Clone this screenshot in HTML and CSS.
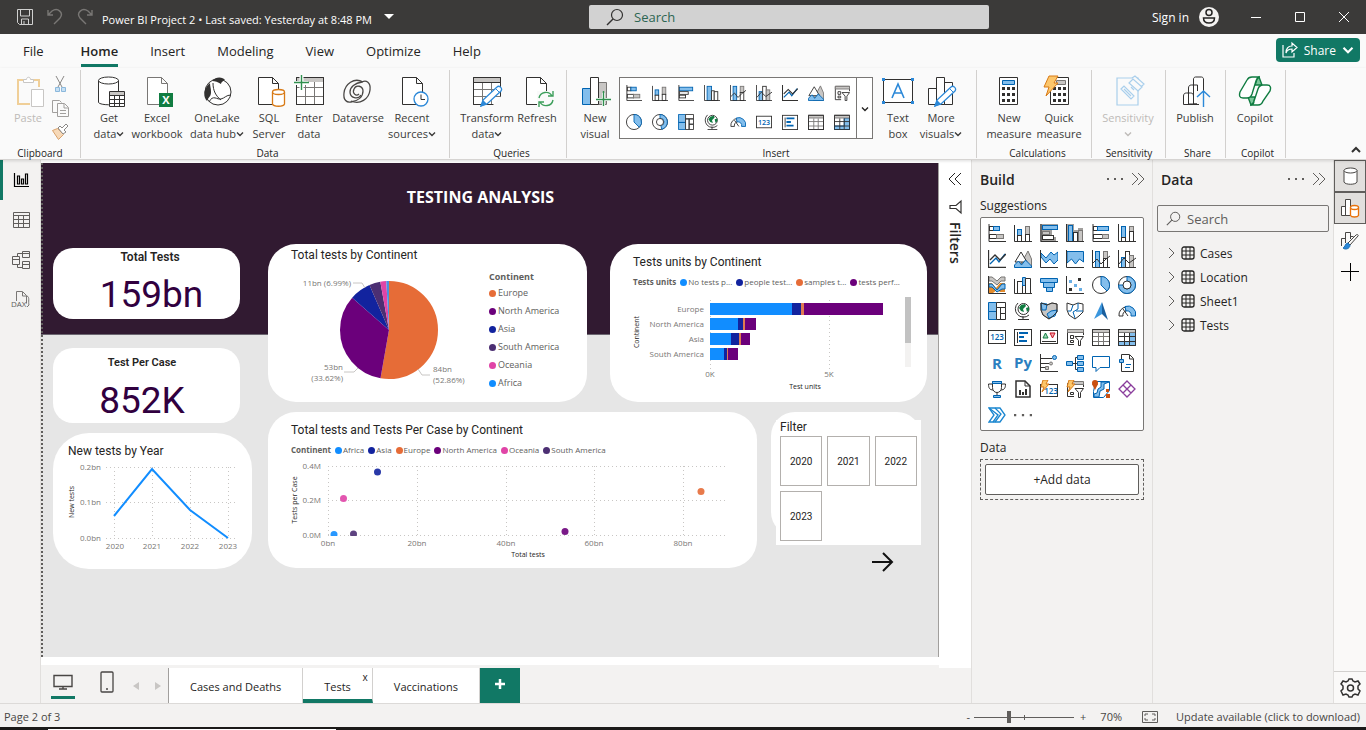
FILE: index.html
```
<!DOCTYPE html>
<html lang="en">
<head>
    <meta charset="UTF-8">
    <title>Power BI Project 2</title>
    <link rel="stylesheet" href="styles.css">
</head>
<body>
    <!-- shared icons -->
    <svg class="sprite" aria-hidden="true">
        <symbol id="i-stackbar" viewBox="0 0 18 18"><rect class="wt" x="1.500" y="2.500" width="4" height="4"/><rect class="bl" x="5.500" y="2.500" width="6" height="4"/><rect class="wt" x="1.500" y="10.500" width="7" height="4"/><rect class="gr" x="8.500" y="10.500" width="7" height="4"/><path class="ln" d="M1 0v17.500h17"/></symbol>
        <symbol id="i-stackcol" viewBox="0 0 18 18"><rect class="bl" x="3.500" y="5.500" width="4" height="6"/><rect class="wt" x="3.500" y="11.500" width="4" height="6"/><rect class="gr" x="11.500" y="2.500" width="4" height="8"/><rect class="wt" x="11.500" y="10.500" width="4" height="7"/><path class="ln" d="M.5 1v16.500H18"/></symbol>
        <symbol id="i-clusbar" viewBox="0 0 18 18"><rect class="bl" x="1.500" y="2.500" width="15" height="4"/><rect class="wt" x="1.500" y="7.500" width="10" height="3"/><rect class="wt" x="1.500" y="11.500" width="7" height="3"/><path class="ln" d="M1 0v17.500h17"/></symbol>
        <symbol id="i-cluscol" viewBox="0 0 18 18"><rect class="bl" x="3.500" y="1.500" width="5" height="16"/><rect class="wt" x="8.500" y="6.500" width="3" height="11"/><rect class="wt" x="11.500" y="7.500" width="4" height="10"/><path class="ln" d="M.5 0v17.500H18"/></symbol>
        <symbol id="i-clusbar2" viewBox="0 0 18 18"><path fill="#a19f9d" d="M0 0h18v5h-6v8h4v5H0z"/><rect class="bl" x="2.500" y="1.500" width="15" height="4"/><rect class="gr" x="2.500" y="7.500" width="7" height="3"/><rect class="wt" x="2.500" y="11.500" width="11" height="4"/><path class="ln" d="M1 0v17.500h17"/></symbol>
        <symbol id="i-cluscol2" viewBox="0 0 18 18"><path fill="#a19f9d" d="M0 0h8v6h4V4h5v14H0z"/><rect class="bl" x="2.500" y="1.500" width="4" height="16"/><rect class="wt" x="7.500" y="8.500" width="4" height="9"/><rect class="gr" x="12.500" y="6.500" width="4" height="11"/><path class="ln" d="M.5 0v17.500H18"/></symbol>
        <symbol id="i-fullbar" viewBox="0 0 18 18"><rect class="wt" x="1.500" y="2.500" width="4" height="4"/><rect class="bl" x="5.500" y="2.500" width="11" height="4"/><rect class="wt" x="1.500" y="10.500" width="9" height="4"/><rect class="gr" x="10.500" y="10.500" width="6" height="4"/><path class="ln" d="M1 0v17.500h17"/></symbol>
        <symbol id="i-fullcol" viewBox="0 0 18 18"><rect class="bl" x="3.500" y="2.500" width="4" height="11"/><rect class="wt" x="3.500" y="13.500" width="4" height="4"/><rect class="gr" x="11.500" y="2.500" width="4" height="5"/><rect class="wt" x="11.500" y="7.500" width="4" height="10"/><path class="ln" d="M.5 0v17.500H18"/></symbol>
        <symbol id="i-line" viewBox="0 0 18 18"><path class="bs thick" d="M2 14l6-6 3 4 6-8"/><path class="ln thick" d="M2 10l5-5 5 5 6-6M.5 0v17.500H18"/></symbol>
        <symbol id="i-area" viewBox="0 0 18 18"><path class="gr" d="M8 12l6-11 3.500 8v8.500H6z"/><path class="wt" d="M1 12l6-10 6 10z"/><path class="bl" d="M.5 17.500V15l4-4 3 4 4-5 6 6v1.500z"/></symbol>
        <symbol id="i-stackarea" viewBox="0 0 18 18"><path class="bl" d="M1 3l5 5 5-6 3 3 4-3v8l-4 4-4-5-4 4-5-6z"/><path class="ln" d="M.5 0v17.500H18"/></symbol>
        <symbol id="i-fullarea" viewBox="0 0 18 18"><path class="bl" d="M1 1.500h16.500V12l-4-3-4 5-4-5L1 13z"/><path class="ln" d="M.5 0v17.500H18"/></symbol>
        <symbol id="i-combo" viewBox="0 0 18 18"><rect class="bl" x="3.500" y="1.500" width="4" height="16"/><rect class="gr" x="11.500" y="1.500" width="4" height="7"/><rect class="wt" x="11.500" y="8.500" width="4" height="9"/><path class="ln" d="M1 13l4-4 4 5 5-5 4-3M.5 0v17.500H18"/></symbol>
        <symbol id="i-combo2" viewBox="0 0 18 18"><rect class="bl" x="3.500" y="7.500" width="4" height="10"/><rect class="wt" x="7.500" y="1.500" width="4" height="16"/><rect class="gr" x="11.500" y="5.500" width="4" height="12"/><path class="ln" d="M1 14l5-6 5 5 7-5M.5 0v17.500H18"/></symbol>
        <symbol id="i-ribbon" viewBox="0 0 18 18"><path fill="#e38b2c" d="M0 7h4l4 5 4-5h5v9h-5l-3-2-4 3H0z"/><path class="gr" d="M1 1h3l5 4 4-4h4v4h-4L9 9 4 5H1z"/><path class="bl" d="M1 8h3l5 6 5-6h3v5h-3l-5 3-5-5H1z"/><path class="ln" d="M.5 0v17.500H18"/></symbol>
        <symbol id="i-waterfall" viewBox="0 0 18 18"><rect class="wt" x="3.500" y="5.500" width="5" height="12"/><path class="bl" d="M8.500 1.500h3v8h-3z"/><path class="wt" d="M11.500 2.500h5v15h-5z"/><path class="ln" d="M.5 3v14.500H18"/></symbol>
        <symbol id="i-funnel" viewBox="0 0 18 18"><path class="bl" d="M.5 2.500h17v4H.5zM3.500 6.500h11v5h-11zM6.500 11.500h6v4h-6z"/></symbol>
        <symbol id="i-scatter" viewBox="0 0 18 18"><path class="ln" d="M.5 0v17.500H18"/><path fill="#69afe5" d="M3 4h3v3H3zM8 8h3v3H8zM13 12h3v3h-3z"/><path fill="#323130" d="M12 2h3v3h-3zM3 12h3v3H3z"/></symbol>
        <symbol id="i-pie" viewBox="0 0 18 18"><circle class="wt" cx="9" cy="9" r="8.500"/><path class="bl" d="M9 .5A8.500 8.500 0 0 1 15 15L9 9z"/></symbol>
        <symbol id="i-donut" viewBox="0 0 18 18"><circle class="wt" cx="9" cy="9" r="8.500"/><path class="bl" d="M9 .5A8.500 8.500 0 1 1 .5 9H5a4 4 0 1 0 4-4z"/><circle class="wt" cx="9" cy="9" r="4"/></symbol>
        <symbol id="i-ring" viewBox="0 0 18 18"><circle class="wt" cx="9" cy="9" r="8.500"/><path class="bl" d="M9 .5a8.500 8.500 0 0 1 2 16.700L10 13a4 4 0 0 0-1-8z"/><circle class="wt" cx="9" cy="9" r="4"/></symbol>
        <symbol id="i-treemap" viewBox="0 0 18 18"><path class="bl" d="M.5.5h8v9h-8zM.5 9.500h8v8h-8z"/><path class="wt" d="M8.500.5h9v5h-9zM8.500 5.500h4v12h-4zM12.500 5.500h5v6h-5zM12.500 11.500h5v6h-5z"/></symbol>
        <symbol id="i-globe" viewBox="0 0 18 18"><circle class="wt" cx="9.500" cy="7" r="5.500"/><path fill="#107c41" d="M7 3l4-1 1 2-3 3 1 3-3-1-2-3zM12 6l3-1v3l-2 2z"/><path class="ln" d="M4 1a8 8 0 0 0 11 12M9 14v3M4 17.500h11"/></symbol>
        <symbol id="i-map" viewBox="0 0 18 18"><path class="gr" d="M1 1l6 2 5-2 5 1v8l-4 4-4 3-6-4-2-5z"/><path class="bl" d="M1 1l6 1-1 6H2zM7 12l4-3 6-1-2 6-6 2z"/><path class="ln" d="M1 1l6 2 5-2 5 1v8l-4 4-4 3-6-4-2-5z"/></symbol>
        <symbol id="i-map2" viewBox="0 0 18 18"><path class="wt" d="M1 1l6 2 5-2 5 1v8l-4 4-4 3-6-4-2-5z"/><path class="bs" d="M7 3L5 9H2M12 1v6l-5 3 2 6M10 9h7"/></symbol>
        <symbol id="i-azmap" viewBox="0 0 18 18"><path fill="#3a96dd" d="M10 0L2 17l8-5z"/><path fill="#1a5f9e" d="M10 0l6 18-6-6z"/></symbol>
        <symbol id="i-gauge" viewBox="0 0 18 18"><path class="wt" d="M1 14a8 8 0 0 1 7-9v4a4 4 0 0 0-3 5z"/><path class="bl" d="M7 4.500a8 8 0 0 1 10.500 9.500H13a4 4 0 0 0-5-5z"/><path class="ln" d="M5 7l5 7"/></symbol>
        <symbol id="i-card" viewBox="0 0 18 18"><rect class="wt" x=".5" y="2.500" width="17" height="13"/><text class="t123" x="9" y="12">123</text></symbol>
        <symbol id="i-multi" viewBox="0 0 18 18"><rect class="wt" x=".5" y="1.500" width="17" height="16"/><path class="ln" d="M3.500 4v11"/><path stroke="#0063b1" stroke-width="2" d="M5 5h9M5 9h5M5 13h8"/></symbol>
        <symbol id="i-kpi" viewBox="0 0 18 18"><rect class="wt" x=".5" y="2.500" width="17" height="13"/><path fill="#9fd8b5" stroke="#107c41" d="M3 10l2.500-5L8 10z"/><path fill="#f4a6ae" stroke="#c50f1f" d="M10 5h5l-2.500 5z"/><path class="ln" d="M2 13.500h14"/></symbol>
        <symbol id="i-slicer" viewBox="0 0 18 18"><path class="ln" d="M8 16.500H1.500v-15h16V7"/><path class="gr" d="M1.500 1.500h16v3h-16z"/><path class="wt" d="M4.500 7.500h3v3h-3zM4.500 12.500h3v2h-3zM9 8.500h8.500l-3 4v5h-2v-5z"/></symbol>
        <symbol id="i-table" viewBox="0 0 18 18"><rect class="wt" x=".5" y="1.500" width="17" height="16"/><path class="gr" d="M.5 1.500h17v3H.5z"/><path class="gs" d="M1 8.500h16M1 13.500h16M6.500 5v12M11.500 5v12"/><path class="ln" d="M.5 1.500h17v16H.5z"/></symbol>
        <symbol id="i-matrix" viewBox="0 0 18 18"><rect class="wt" x=".5" y="1.500" width="17" height="16"/><path class="bl" d="M11.500 4.500h6v13H.5v-4h11z"/><path class="gr" d="M.5 1.500h17v3H.5z"/><path class="ln" d="M1 8.500h16M1 13.500h16M6.500 5v12M11.500 5v12M.5 1.500h17v16H.5z"/></symbol>
        <symbol id="i-r" viewBox="0 0 18 18"><text class="glyph" x="9" y="15">R</text></symbol>
        <symbol id="i-py" viewBox="0 0 18 18"><text class="glyph" x="9" y="14">Py</text></symbol>
        <symbol id="i-influence" viewBox="0 0 18 18"><path class="ln" d="M.5 0v17.500H18M1 4.500h11M1 9.500h8M1 13.500h5"/><circle class="bl" cx="14.500" cy="3.500" r="2"/><circle class="gr" cx="11" cy="9.500" r="1.500"/><path class="gr" d="M5.500 12.500h3v3h-3z"/></symbol>
        <symbol id="i-tree" viewBox="0 0 18 18"><path class="ln" d="M6 9.500h6M9.500 3.500v12M9.500 3.500H12M9.500 15.500H12"/><path class="bl" d="M.5 7.500h6v4h-6zM11.500 1.500h6v4h-6zM11.500 7.500h6v4h-6zM11.500 13.500h6v4h-6z"/></symbol>
        <symbol id="i-qa" viewBox="0 0 18 18"><path class="bs" d="M.5 2.500h17v11H8l-4 4v-4H.5z"/></symbol>
        <symbol id="i-narr" viewBox="0 0 18 18"><path class="wt" d="M3.500.5h8l4 4v13h-12z"/><path class="ln" d="M11.500 1v4H15"/><path class="bs" d="M8 10.500h5M7 13.500h5"/><path class="bl" d="M1.500 5.500h4v3h-4z"/></symbol>
        <symbol id="i-goal" viewBox="0 0 18 18"><path class="ln" d="M4 4H.5c0 4 1 6 5 6M14 4h3.500c0 4-1 6-5 6M9 12v4"/><path class="wt" d="M4.500 1.500h9v6c0 3-2 5-4.500 5s-4.500-2-4.500-5z"/><path class="bl" d="M4.500 1.500h9v2h-9zM5.500 15.500h7v2h-7z"/></symbol>
        <symbol id="i-report" viewBox="0 0 18 18"><path fill="#fff" stroke="#323130" stroke-width="1.500" d="M2 1h9l5 5v11H2z"/><path class="ln" d="M11 1v5h5"/><path fill="#323130" d="M5 10h2v5H5zM8 12h2v3H8zM11 9h2v6h-2z"/></symbol>
        <symbol id="i-cardnew" viewBox="0 0 18 18"><rect class="wt" x=".5" y="4.500" width="17" height="12"/><text class="t123" x="11" y="14">123</text><path class="or" d="M3 0h5L6 4h3l-7 8 2-5H1z"/></symbol>
        <symbol id="i-slicernew" viewBox="0 0 18 18"><path class="ln" d="M8 16.500H1.500v-13h16V7"/><path class="gr" d="M6.500 1.500h11v3h-11z"/><path class="wt" d="M4.500 12.500h3v2h-3zM9 8.500h8.500l-3 4v5h-2v-5z"/><path class="or" d="M3 0h5L6 4h3l-7 8 2-5H1z"/></symbol>
        <symbol id="i-arcgis" viewBox="0 0 18 18"><path fill="#fff" stroke="#0063b1" d="M3.500 1.500h14v9l-6 7h-10v-6z"/><path class="bl" d="M17 2l-5 2v5l-4 2-1 6h-5v-3l3-1 1-4 3-2V2z"/><circle cx="3" cy="3" r="3" fill="#ca5010"/><path fill="#ca5010" d="M0 4h6l-3 6zM14 9h3v3h-3zM14 14h4v4h-4z"/></symbol>
        <symbol id="i-apps" viewBox="0 0 18 18"><path fill="#fff" stroke="#8a3d9c" stroke-width="1.300" d="M9 1l4 4-4 4-4-4zM5 5L1 9l4 4 4-4zM13 5l4 4-4 4-4-4zM9 9l4 4-4 4-4-4z"/></symbol>
        <symbol id="i-automate" viewBox="0 0 18 18"><path fill="#fff" stroke="#1a86d0" stroke-width="1.300" d="M1 2h11l5 7-5 7H1l5-7z"/><path fill="none" stroke="#1a86d0" stroke-width="1.300" d="M1 2l9 7-5 7M7 2l6 6-6 8"/></symbol>
        <symbol id="i-chev" viewBox="0 0 8 8"><path d="M1 2.500l3 3 3-3" fill="none" stroke="currentColor" stroke-width="1.400"/></symbol>
        <symbol id="i-lens" viewBox="0 0 18 18"><circle cx="11" cy="7" r="5.500" fill="none" stroke="currentColor" stroke-width="1.200"/><path d="M7 11l-6 6" stroke="currentColor" stroke-width="1.400"/></symbol>
        <symbol id="i-dbl" viewBox="0 0 14 14"><path d="M1 1l6 6-6 6M7 1l6 6-6 6" fill="none" stroke="currentColor"/></symbol>
        <symbol id="i-dots" viewBox="0 0 16 4"><path d="M0 1h2v2H0zM7 1h2v2H7zM14 1h2v2h-2z" fill="#605e5c"/></symbol>
        <symbol id="i-pencil" viewBox="0 0 32 32"><path fill="#fff" stroke="#2b88d8" stroke-width="1.300" d="M10 30l2-6L26 11c2-2 6 1 4 4L16 28z"/><path fill="#2b88d8" d="M9 31l3-7 4 4z"/><path stroke="#2b88d8" d="M24 12l5 5"/></symbol>
        <symbol id="i-grid" viewBox="0 0 14 14"><rect x="1" y="1" width="12" height="12" rx="2" fill="none" stroke="#252423" stroke-width="1.300"/><path d="M5 1v12M9 1v12M1 5h12M1 9h12" stroke="#252423"/></symbol>
        <symbol id="i-right" viewBox="0 0 8 12"><path d="M1 1l5 5-5 5" fill="none" stroke="#605e5c"/></symbol>
    </svg>

    <header class="titlebar">
        <div class="title-left">
            <svg width="18" height="18" viewBox="0 0 18 18" fill="none" stroke="#d0d0d0"><path d="M1.500 1.500h15v15h-13l-2-2zM4.500 2v6h9V2M5.500 16v-5h7v5M8 13v3"/></svg>
            <svg width="18" height="18" viewBox="0 0 18 18" fill="none" stroke="#797775" stroke-width="1.400"><path d="M2 2v5h5M2 7l4-4c6-4 12 2 8 7l-6 6"/></svg>
            <svg width="18" height="18" viewBox="0 0 18 18" fill="none" stroke="#797775" stroke-width="1.400"><path d="M16 2v5h-5M16 7l-4-4C6-1 0 5 4 10l6 6"/></svg>
            <span class="doc">Power BI Project 2 • Last saved: Yesterday at 8:48 PM</span>
            <svg width="10" height="6" viewBox="0 0 10 6"><path d="M0 0h10L5 5z" fill="#fff"/></svg>
        </div>
        <label class="top-search">
            <svg width="18" height="18"><use href="#i-lens"/></svg>
            <input type="text" placeholder="Search" aria-label="Search">
        </label>
        <div class="title-right">
            <a href="#">Sign in</a>
            <svg width="20" height="20" viewBox="0 0 20 20"><circle cx="10" cy="10" r="10" fill="#f3f2f1"/><g fill="none" stroke="#252423" stroke-width="1.500"><circle cx="10" cy="5.500" r="3"/><path d="M4.500 11h11c0 3-2 5-5.500 5s-5.500-2-5.500-5z"/></g></svg>
            <button aria-label="Minimize"><svg width="12" height="12"><path d="M1 6.500h10" stroke="#fff"/></svg></button>
            <button aria-label="Maximize"><svg width="12" height="12"><path d="M1.500 1.500h9v9h-9z" stroke="#fff" fill="none"/></svg></button>
            <button aria-label="Close"><svg width="12" height="12"><path d="M1 1l10 10M11 1L1 11" stroke="#fff"/></svg></button>
        </div>
    </header>

    <nav class="menu">
        <a href="#">File</a>
        <a href="#" class="active">Home</a>
        <a href="#">Insert</a>
        <a href="#">Modeling</a>
        <a href="#">View</a>
        <a href="#">Optimize</a>
        <a href="#">Help</a>
        <button class="share">
            <svg width="16" height="16" viewBox="0 0 16 16" fill="none" stroke="#fff" stroke-width="1.200"><path d="M1 3v12h11v-4M4 11c0-5 3-7 6-7V1l5 4.500L10 10V7c-3 0-5 1-6 4z"/></svg>
            Share
            <svg width="12" height="12"><use href="#i-chev"/></svg>
        </button>
    </nav>

    <div class="ribbon">
        <section class="group g-clip">
            <div class="tools">
                <button class="tool w36 off"><svg class="big" viewBox="0 0 32 32"><path fill="none" stroke="#f0cf98" stroke-width="2" d="M12 4H6v24h12M21 4h6v7"/><path fill="#fff" stroke="#c8c6c4" d="M11.500 6.500v-3h3c0-3 4-3 4 0h3v3zM19.500 13.500h12v17h-12z"/></svg>Paste</button>
                <div class="minis">
                    <button aria-label="Cut"><svg width="18" height="18" viewBox="0 0 18 18" fill="none"><path stroke="#8a8886" d="M5 1l6 11M13 1L7 12"/><path fill="#c7e0f4" stroke="#8bb8dc" d="M4.500 12.500h4v4h-4zM10.500 12.500h4v4h-4z"/></svg></button>
                    <button aria-label="Copy"><svg width="18" height="18" viewBox="0 0 18 18" fill="none" stroke="#a19f9d"><path d="M6 13.500H1.500v-12h7l2 2M6.500 4.500h7l4 4v9h-11zM13 5v4h4M9 11.500h6M9 14.500h6"/></svg></button>
                    <button aria-label="Format painter"><svg width="18" height="18" viewBox="0 0 18 18"><path fill="#f7d9b8" stroke="#d9a26c" d="M1.500 7.500l5-2 6 6-5 5z"/><path fill="#fff" stroke="#8a8886" d="M7 5l2-2 2 2 4-4 2 2-4 4 2 2-3 2z"/></svg></button>
                </div>
            </div>
            <h2>Clipboard</h2>
        </section>
        <section class="group g-data">
            <div class="tools">
                <button class="tool w46"><svg class="big" viewBox="0 0 32 32"><path class="wt" d="M5.500 4.500v22c2 3 18 3 20 0v-22"/><ellipse class="wt" cx="15.500" cy="4.500" rx="10" ry="3.500"/><path class="wt" d="M16.500 15.500h15v15h-15z"/><path class="ln" d="M16.500 19.500h15M16.500 23.500h15M16.500 27.500h15M21.500 19v11M26.500 19v11"/><path fill="#c8c6c4" d="M17 16h14v3H17z"/></svg><span>Get<br>data<svg class="chev"><use href="#i-chev"/></svg></span></button>
                <button class="tool w50"><svg class="big" viewBox="0 0 32 32"><path fill="#fff" stroke="#797775" d="M6.500 1.500h14l6 6v21h-20zM20.500 1.500v6h6"/><path fill="#107c41" d="M18 17h14v14H18z"/><text class="xl" x="25" y="28">X</text></svg><span>Excel<br>workbook</span></button>
                <button class="tool w70"><svg class="big" viewBox="0 0 32 32"><circle cx="17" cy="16" r="13" fill="#fff" stroke="#323130"/><path fill="#323130" d="M11 5c4-5 11-4 13-1-2 1-4 2-4 4-3-2-6-3-9-3zM9 7c-7 6-7 14-3 18 2-5 4-4 4-9 0-4-1-6-1-9z"/><path class="ln" d="M12 7c0 8 3 13 8 17M8 26c4-8 8-2 12-3s5-4 10-4"/></svg><span>OneLake<br>data hub<svg class="chev"><use href="#i-chev"/></svg></span></button>
                <button class="tool w34"><svg class="big" viewBox="0 0 32 32"><path class="wt" d="M5.500 1.500h14l6 6v21h-20zM19.500 1.500v6h6"/><path fill="#fff" stroke="#d87a16" stroke-width="1.300" d="M19.500 16v12c1 3 11 3 12 0V16"/><ellipse cx="25.500" cy="16" rx="6" ry="2.500" fill="#fff" stroke="#d87a16" stroke-width="1.300"/></svg><span>SQL<br>Server</span></button>
                <button class="tool w46"><svg class="big" viewBox="0 0 32 32"><path class="wt" d="M3.500 1.500h27v27h-27z"/><path fill="#c8c6c4" d="M4 2h26v4H4z"/><path class="gs" d="M4 11.500h26M4 20.500h26M12.500 6v22M21.500 6v22"/><path class="ln" d="M3.500 1.500h27v27h-27z"/><path stroke="#fff" stroke-width="4" d="M8.500 0v13M1 7h14"/><path stroke="#2f8f4e" stroke-width="1.400" d="M8.500-1v15M1 6.500h15"/></svg><span>Enter<br>data</span></button>
                <button class="tool w52"><svg class="big" viewBox="0 0 32 32" fill="none" stroke="#484644" stroke-width="1.300"><path d="M21 6C12 1 3 8 2 17c-1 7 3 10 7 9 7-1 12-5 12-11 0-5-7-7-9-2-2 4 2 8 5 5"/><path d="M9 25c9 4 18-2 19-11 1-8-4-10-8-8-7 1-12 5-12 10 0 6 8 8 11 3"/></svg><span>Dataverse</span></button>
                <button class="tool w56"><svg class="big" viewBox="0 0 32 32"><path class="wt" d="M6.500 1.500h14l6 6v21h-20zM20.500 1.500v6h6"/><circle cx="25" cy="23" r="7" fill="#fff" stroke="#2b88d8" stroke-width="1.300"/><path class="ln" d="M25 18.500v5h4"/></svg><span>Recent<br>sources<svg class="chev"><use href="#i-chev"/></svg></span></button>
            </div>
            <h2>Data</h2>
        </section>
        <section class="group g-query">
            <div class="tools">
                <button class="tool w60"><svg class="big" viewBox="0 0 32 32"><path class="wt" d="M2.500 1.500h27v27h-27z"/><path fill="#c8c6c4" d="M3 2h26v4H3z"/><path class="gs" d="M3 13.500h26M3 20.500h26M11.500 6v22M20.500 6v22"/><path class="ln" d="M2.500 1.500h27v27h-27zM3 6.500h26"/><path fill="#fafafa" d="M22 29l10-11v14H18z"/><use href="#i-pencil"/></svg><span>Transform<br>data<svg class="chev"><use href="#i-chev"/></svg></span></button>
                <button class="tool w40"><svg class="big" viewBox="0 0 32 32"><path class="wt" d="M5.500 1.500h14l6 6v21h-20zM19.500 1.500v6h6"/><path fill="#fafafa" d="M16 15h16v17H16z"/><path fill="none" stroke="#3c9e5a" stroke-width="1.400" d="M18 22a7 7 0 0 1 13-2M32 24a7 7 0 0 1-13 2M32 15v5h-5M18 31v-5h5"/></svg><span>Refresh</span></button>
            </div>
            <h2>Queries</h2>
        </section>
        <section class="group g-insert">
            <div class="tools">
                <button class="tool w38"><svg class="big" viewBox="0 0 32 32"><path class="bl" d="M3.500 12.500h8v16h-8z"/><path class="gr" d="M19.500 6.500h8v22h-8z"/><path class="wt" d="M11.500 1.500h8v27h-8z"/><path stroke="#fff" stroke-width="3" d="M24.500 17v13M18 23.500h13"/><path stroke="#2f8f4e" stroke-width="1.400" d="M24.500 15v15M17 23.500h15"/></svg><span>New<br>visual</span></button>
                <div class="gallery">
                    <div class="gallery-grid">
                        <svg><use href="#i-stackbar"/></svg><svg><use href="#i-stackcol"/></svg><svg><use href="#i-clusbar"/></svg><svg><use href="#i-cluscol"/></svg><svg><use href="#i-combo"/></svg><svg><use href="#i-combo2"/></svg><svg><use href="#i-line"/></svg><svg><use href="#i-area"/></svg><svg><use href="#i-slicer"/></svg>
                        <svg><use href="#i-pie"/></svg><svg><use href="#i-ring"/></svg><svg><use href="#i-treemap"/></svg><svg><use href="#i-globe"/></svg><svg><use href="#i-gauge"/></svg><svg><use href="#i-card"/></svg><svg><use href="#i-multi"/></svg><svg><use href="#i-table"/></svg><svg><use href="#i-matrix"/></svg>
                    </div>
                    <button aria-label="More visuals"><svg class="chev"><use href="#i-chev"/></svg></button>
                </div>
                <button class="tool w42"><svg class="big" viewBox="0 0 32 32"><path class="wt" d="M1.500 3.500h29v23h-29z"/><path fill="#2b88d8" d="M0 2h3v3H0zM29 2h3v3h-3zM0 25h3v3H0zM29 25h3v3h-3z"/><path fill="none" stroke="#2b88d8" stroke-width="1.600" d="M10 22l6-14 6 14M12 17h8"/></svg><span>Text<br>box</span></button>
                <button class="tool w44"><svg class="big" viewBox="0 0 32 32"><path class="wt" d="M3.500 12.500h8v16h-8zM19.500 6.500h8v22h-8zM11.500 1.500h8v27h-8z"/><use href="#i-pencil"/></svg><span>More<br>visuals<svg class="chev"><use href="#i-chev"/></svg></span></button>
            </div>
            <h2>Insert</h2>
        </section>
        <section class="group g-calc">
            <div class="tools">
                <button class="tool w50"><svg class="big" viewBox="0 0 32 32"><path class="wt" d="M6.500 1.500h18v27h-18z"/><path class="bl" d="M9.500 4.500h12v4h-12z"/><path stroke="#323130" stroke-width="3" stroke-dasharray="3 2" d="M9 12.500h13M9 18.500h13M9 24.500h13"/></svg><span>New<br>measure</span></button>
                <button class="tool w50"><svg class="big" viewBox="0 0 32 32"><path class="wt" d="M7.500 1.500h18v27h-18z"/><path class="gr" d="M13.500 4.500h9v4h-9z"/><path stroke="#323130" stroke-width="3" stroke-dasharray="3 2" d="M10 12.500h13M10 18.500h13M10 24.500h13"/><path fill="#fcc66b" stroke="#d87a16" d="M6 0h9l-4 7h4L3 20l3-9H1z"/></svg><span>Quick<br>measure</span></button>
            </div>
            <h2>Calculations</h2>
        </section>
        <section class="group g-sens">
            <div class="tools">
                <button class="tool w70 off"><svg class="big" viewBox="0 0 32 32" fill="#fafafa" stroke="#a9cfec" stroke-width="1.200"><path d="M5 2h21v27H5z"/><path d="M9 13l3-3 10 10-3 3zM12 13l7 7M17 7l4-4 9 8-4 4zM20 2l3-2 9 8-3 3M22 14l-3-3"/></svg><span>Sensitivity<br><svg class="chev"><use href="#i-chev"/></svg></span></button>
            </div>
            <h2>Sensitivity</h2>
        </section>
        <section class="group g-pub">
            <div class="tools">
                <button class="tool w50"><svg class="big" viewBox="0 0 32 32"><path class="wt" d="M14.500 28V3c0-1 1-2 2-2h6c1 0 2 1 2 2v25zM9.500 28V12c0-2 1-3 3-3h6v19zM4.500 28.500V20c0-2 1-3 3-3h4c2 0 3 1 3 3v8.500z"/><path fill="#fafafa" d="M18 15h14v17H18z"/><path fill="none" stroke="#2b88d8" stroke-width="1.400" d="M24.500 31V15M18 21l6.500-6 6.500 6"/><path class="ln" d="M14 28.500h6"/></svg><span>Publish</span></button>
            </div>
            <h2>Share</h2>
        </section>
        <section class="group g-pub">
            <div class="tools">
                <button class="tool w50"><svg class="big" viewBox="0 0 32 32" fill="#fff" stroke="#107c41" stroke-width="1.400"><path d="M20 1l3 8h-7l2-6zM12 29l-3-8h7l-1 5z" fill="#7dc79b"/><path d="M8 4c1-2 2-3 5-3h8c-2 0-3 1-4 4l-4 13c-1 3-2 4-5 4H4c-4 0-4-3-3-6zM24 25c-1 3-3 4-5 4h-8c2 0 4-1 4-4l4-12c1-3 2-4 5-4h4c4 0 4 3 3 6z"/></svg><span>Copilot</span></button>
            </div>
            <h2>Copilot</h2>
        </section>
        <button class="collapse" aria-label="Collapse ribbon"><svg width="12" height="8" viewBox="0 0 12 8"><path d="M2 6l4-4 4 4" fill="none" stroke="#323130" stroke-width="2"/></svg></button>
    </div>

    <main class="workspace">
        <nav class="views">
            <a href="#" class="active" aria-label="Report view"><svg viewBox="0 0 18 18" fill="none" stroke="#000" stroke-width="1.200"><path d="M2.500 2v13.500H17M5.500 5v8h2V5zM9.500 8v5h2V8zM13.500 3v10h2V3z"/></svg></a>
            <a href="#" aria-label="Table view"><svg viewBox="0 0 18 18" fill="none" stroke="#605e5c"><path d="M1.500 1.500h16v15h-16zM1 4.500h16M1 8.500h16M1 12.500h16M6.500 5v12M11.500 5v12"/></svg></a>
            <a href="#" aria-label="Model view"><svg viewBox="0 0 18 18" fill="none" stroke="#605e5c"><path d="M.5 5.500h7v8h-7zM.5 8.500h7M10.500.5h7v6h-7zM10.500 2.500h7M10.500 10.500h7v7h-7zM10.500 13.500h7M5.500 5V2.500h5M5.500 14v2.500h5"/></svg></a>
            <a href="#" aria-label="DAX query view"><svg viewBox="0 0 18 18" fill="none" stroke="#797775"><path d="M4.500 10V.5h6l4 4v8M10.500 1v4h4M15 5c3 1 1 6 2 9l-2 2"/><text class="dax" x="-1" y="16">DAX</text></svg></a>
        </nav>

        <div class="center">
            <div class="canvas-row">
                <div class="canvas">
                    <div class="page">
                        <h1>TESTING ANALYSIS</h1>
                        <div class="board">
                            <div class="board-left">
                                <div class="kpi"><h3>Total Tests</h3><strong>159bn</strong></div>
                                <div class="kpi second"><h3>Test Per Case</h3><strong>852K</strong></div>
                                <div class="card year">
                                    <h3>New tests by Year</h3>
                                    <svg viewBox="0 0 199 94" class="chart">
                                        <path class="dots" d="M53 8.500h129M53 43.500h129M53 79.500h129M61.500 8v71M99.500 8v71M137.500 8v71M175.500 8v71"/>
                                        <path d="M61 57l38-47 38 41 38 28" fill="none" stroke="#118dff" stroke-width="2"/>
                                        <g class="tick end"><text x="48" y="11">0.2bn</text><text x="48" y="46">0.1bn</text><text x="48" y="82">0.0bn</text></g>
                                        <g class="tick mid"><text x="62" y="90">2020</text><text x="99" y="90">2021</text><text x="137" y="90">2022</text><text x="175" y="90">2023</text></g>
                                        <text class="axis" transform="translate(21 43) rotate(-90)">New tests</text>
                                    </svg>
                                </div>
                            </div>
                            <div class="board-right">
                                <div class="row top">
                                    <div class="card pie">
                                        <h3>Total tests by Continent</h3>
                                        <div class="pie-body">
                                            <svg viewBox="0 0 190 126" class="pie-svg">
                                                <g transform="translate(98 63) rotate(-90)" fill="none" stroke-width="49">
                                                    <circle r="24.500" pathLength="100" stroke="#e66c37" stroke-dasharray="52.860 100"/>
                                                    <circle r="24.500" pathLength="100" stroke="#6b007b" stroke-dasharray="33.620 100" stroke-dashoffset="-52.860"/>
                                                    <circle r="24.500" pathLength="100" stroke="#12239e" stroke-dasharray="6.990 100" stroke-dashoffset="-86.480"/>
                                                    <circle r="24.500" pathLength="100" stroke="#4c2f73" stroke-dasharray="3.600 100" stroke-dashoffset="-93.470"/>
                                                    <circle r="24.500" pathLength="100" stroke="#e044a7" stroke-dasharray="2 100" stroke-dashoffset="-97.070"/>
                                                    <circle r="24.500" pathLength="100" stroke="#4a90e2" stroke-dasharray=".930 100" stroke-dashoffset="-99.070"/>
                                                </g>
                                                <path d="M62 16h9l3 5M53 105h10l4-4M127 102l4 6h8" fill="none" stroke="#c8c6c4"/>
                                                <g class="tick end"><text x="60" y="19">11bn (6.99%)</text><text x="52" y="103">53bn</text><text x="52" y="114">(33.62%)</text></g>
                                                <g class="tick"><text x="142" y="105">84bn</text><text x="142" y="116">(52.86%)</text></g>
                                            </svg>
                                            <div class="pie-legend">
                                                <b>Continent</b>
                                                <ul>
                                                    <li><i class="c-europe"></i>Europe</li>
                                                    <li><i class="c-namerica"></i>North America</li>
                                                    <li><i class="c-asia"></i>Asia</li>
                                                    <li><i class="c-samerica"></i>South America</li>
                                                    <li><i class="c-oceania"></i>Oceania</li>
                                                    <li><i class="c-africa"></i>Africa</li>
                                                </ul>
                                            </div>
                                        </div>
                                    </div>
                                    <div class="card units">
                                        <h3>Tests units by Continent</h3>
                                        <ul class="legend">
                                            <li><b>Tests units</b></li>
                                            <li><i class="c-africa"></i>No tests p...</li>
                                            <li><i class="c-asia"></i>people test...</li>
                                            <li><i class="c-europe"></i>samples t...</li>
                                            <li><i class="c-namerica"></i>tests perf...</li>
                                        </ul>
                                        <svg viewBox="0 0 317 108" class="chart">
                                            <path class="dots" d="M100.500 6v70M219.500 6v70"/>
                                            <g fill="#118dff"><path d="M100 9h82v12h-82zM100 24h28v12h-28zM100 39h21v12h-21zM100 54h14v12h-14z"/></g>
                                            <g fill="#12239e"><path d="M182 9h9v12h-9zM128 24h5v12h-5zM121 39h8v12h-8zM114 54h3v12h-3z"/></g>
                                            <g fill="#e07a52"><path d="M191 9h3v12h-3zM133 24h2v12h-2zM129 39h2v12h-2zM117 54h1v12h-1z"/></g>
                                            <g fill="#6b007b"><path d="M194 9h79v12h-79zM135 24h11v12h-11zM131 39h9v12h-9zM118 54h10v12h-10z"/></g>
                                            <g class="tick end"><text x="94" y="18">Europe</text><text x="94" y="33">North America</text><text x="94" y="48">Asia</text><text x="94" y="63">South America</text></g>
                                            <g class="tick mid"><text x="100" y="83">0K</text><text x="219" y="83">5K</text></g>
                                            <text class="axis" x="195" y="95">Test units</text>
                                            <text class="axis" transform="translate(29 38) rotate(-90)">Continent</text>
                                            <path fill="#f3f2f1" d="M295 3h6v70h-6z"/><path fill="#c2c2c2" d="M295 3h6v46h-6z"/>
                                        </svg>
                                    </div>
                                </div>
                                <div class="row bottom">
                                    <div class="card percase">
                                        <h3>Total tests and Tests Per Case by Continent</h3>
                                        <ul class="legend">
                                            <li><b>Continent</b></li>
                                            <li><i class="c-africa"></i>Africa</li>
                                            <li><i class="c-asia"></i>Asia</li>
                                            <li><i class="c-europe"></i>Europe</li>
                                            <li><i class="c-namerica"></i>North America</li>
                                            <li><i class="c-oceania"></i>Oceania</li>
                                            <li><i class="c-samerica"></i>South America</li>
                                        </ul>
                                        <svg viewBox="0 0 489 108" class="chart">
                                            <clipPath id="plot"><path d="M50 0h420v74H50z"/></clipPath>
                                            <path class="dots" d="M60 4.500h398M60 38.500h398M60 73.500h398M60.500 4v70M149.500 4v70M238.500 4v70M326.500 4v70M415.500 4v70"/>
                                            <g clip-path="url(#plot)" fill-opacity=".9"><circle cx="66" cy="72.500" r="3.500" fill="#118dff"/><circle cx="85.500" cy="72" r="3.500" fill="#4c2f73"/><circle cx="109.500" cy="10" r="3.500" fill="#12239e"/><circle cx="75.500" cy="36.500" r="3.500" fill="#e044a7"/><circle cx="297" cy="69.500" r="3.500" fill="#6b007b"/><circle cx="433" cy="29.500" r="3.500" fill="#e66c37"/></g>
                                            <g class="tick end"><text x="53" y="7">0.4M</text><text x="53" y="41">0.2M</text><text x="53" y="76">0.0M</text></g>
                                            <g class="tick mid"><text x="60" y="84">0bn</text><text x="149" y="84">20bn</text><text x="238" y="84">40bn</text><text x="326" y="84">60bn</text><text x="415" y="84">80bn</text></g>
                                            <text class="axis" x="260" y="95">Total tests</text>
                                            <text class="axis" transform="translate(29 38) rotate(-90)">Tests per Case</text>
                                        </svg>
                                    </div>
                                    <div class="side">
                                        <div class="filter">
                                            <div class="filter-back"></div>
                                            <div class="slicer">
                                                <h3>Filter</h3>
                                                <div class="years"><button>2020</button><button>2021</button><button>2022</button><button>2023</button></div>
                                            </div>
                                        </div>
                                        <a href="#" class="next" aria-label="Next page"><svg width="22" height="22" viewBox="0 0 22 22"><path d="M0 11h20M11 2l9 9-9 9" fill="none" stroke="#111" stroke-width="2"/></svg></a>
                                    </div>
                                </div>
                            </div>
                        </div>
                    </div>
                </div>
                <aside class="filters">
                    <svg class="flip" width="14" height="14"><use href="#i-dbl"/></svg>
                    <svg width="14" height="14" viewBox="0 0 14 14"><path d="M13 1v12L8 8.500H2v-3h6z" fill="none" stroke="#323130" stroke-width="1.200"/></svg>
                    <h2>Filters</h2>
                </aside>
            </div>
            <div class="pagetabs">
                <button class="device on" aria-label="Desktop layout"><svg width="20" height="16" viewBox="0 0 20 16" fill="none" stroke="#484644"><path d="M1 1.500h18v11H1zM10 12v3M6 15h8" stroke-width="1.400"/></svg></button>
                <button class="device" aria-label="Mobile layout"><svg width="14" height="22" viewBox="0 0 14 22" fill="none" stroke="#484644" stroke-width="1.300"><rect x="1" y="1" width="12" height="20" rx="1"/><path d="M6 18h2"/></svg></button>
                <button class="arrow" aria-label="Previous"><svg width="6" height="8"><path d="M6 0v8L0 4z" fill="#c8c6c4"/></svg></button>
                <button class="arrow" aria-label="Next"><svg width="6" height="8"><path d="M0 0v8l6-4z" fill="#c8c6c4"/></svg></button>
                <a href="#" class="tab first">Cases and Deaths</a>
                <a href="#" class="tab on">Tests<span class="x">x</span></a>
                <a href="#" class="tab">Vaccinations</a>
                <button class="add" aria-label="New page"><svg width="12" height="12"><path d="M6 1v10M1 6h10" stroke="#fff" stroke-width="2.500"/></svg></button>
            </div>
        </div>

        <aside class="pane">
            <div class="pane-head build"><h2>Build</h2><svg width="16" height="4"><use href="#i-dots"/></svg><svg width="14" height="14"><use href="#i-dbl"/></svg></div>
            <div class="pane-body">
                <p>Suggestions</p>
                <div class="visuals">
                    <svg><use href="#i-stackbar"/></svg><svg><use href="#i-stackcol"/></svg><svg><use href="#i-clusbar2"/></svg><svg><use href="#i-cluscol2"/></svg><svg><use href="#i-fullbar"/></svg><svg><use href="#i-fullcol"/></svg>
                    <svg><use href="#i-line"/></svg><svg><use href="#i-area"/></svg><svg><use href="#i-stackarea"/></svg><svg><use href="#i-fullarea"/></svg><svg><use href="#i-combo"/></svg><svg><use href="#i-combo2"/></svg>
                    <svg><use href="#i-ribbon"/></svg><svg><use href="#i-waterfall"/></svg><svg><use href="#i-funnel"/></svg><svg><use href="#i-scatter"/></svg><svg><use href="#i-pie"/></svg><svg><use href="#i-donut"/></svg>
                    <svg><use href="#i-treemap"/></svg><svg><use href="#i-globe"/></svg><svg><use href="#i-map"/></svg><svg><use href="#i-map2"/></svg><svg><use href="#i-azmap"/></svg><svg><use href="#i-gauge"/></svg>
                    <svg><use href="#i-card"/></svg><svg><use href="#i-multi"/></svg><svg><use href="#i-kpi"/></svg><svg><use href="#i-slicer"/></svg><svg><use href="#i-table"/></svg><svg><use href="#i-matrix"/></svg>
                    <svg><use href="#i-r"/></svg><svg><use href="#i-py"/></svg><svg><use href="#i-influence"/></svg><svg><use href="#i-tree"/></svg><svg><use href="#i-qa"/></svg><svg><use href="#i-narr"/></svg>
                    <svg><use href="#i-goal"/></svg><svg><use href="#i-report"/></svg><svg><use href="#i-cardnew"/></svg><svg><use href="#i-slicernew"/></svg><svg><use href="#i-arcgis"/></svg><svg><use href="#i-apps"/></svg>
                    <svg><use href="#i-automate"/></svg><svg><use href="#i-dots"/></svg>
                </div>
                <p class="data-label">Data</p>
                <div class="drop"><button>+Add data</button></div>
            </div>
        </aside>

        <aside class="pane">
            <div class="pane-head"><h2>Data</h2><svg width="16" height="4"><use href="#i-dots"/></svg><svg width="14" height="14"><use href="#i-dbl"/></svg></div>
            <label class="data-search"><svg width="15" height="15"><use href="#i-lens"/></svg><input type="text" placeholder="Search" aria-label="Search data"></label>
            <ul class="tables">
                <li><svg width="8" height="12"><use href="#i-right"/></svg><svg width="14" height="14"><use href="#i-grid"/></svg>Cases</li>
                <li><svg width="8" height="12"><use href="#i-right"/></svg><svg width="14" height="14"><use href="#i-grid"/></svg>Location</li>
                <li><svg width="8" height="12"><use href="#i-right"/></svg><svg width="14" height="14"><use href="#i-grid"/></svg>Sheet1</li>
                <li><svg width="8" height="12"><use href="#i-right"/></svg><svg width="14" height="14"><use href="#i-grid"/></svg>Tests</li>
            </ul>
        </aside>

        <nav class="rail">
            <button class="on" aria-label="Data pane"><svg width="20" height="20" viewBox="0 0 20 20" fill="#fff" stroke="#484644"><path d="M4 4.500V16c1 3 12 3 13 0V4.500"/><ellipse cx="10.500" cy="4.500" rx="6.500" ry="2.500"/></svg></button>
            <button class="on" aria-label="Build pane"><svg width="20" height="20" viewBox="0 0 20 20" fill="#fff" stroke="#484644"><path d="M1.500 8.500h4v9h-4zM5.500 1.500h5v16h-5z"/><path stroke="#e8710a" stroke-width="1.300" d="M10.500 9.500v8c1 2 7 2 8 0v-8"/><ellipse stroke="#e8710a" stroke-width="1.300" cx="14.500" cy="9.500" rx="4" ry="2"/></svg></button>
            <button aria-label="Format pane"><svg width="20" height="20" viewBox="0 0 20 20" fill="none" stroke="#484644"><path d="M1.500 16V8.500h4M5.500 13V2.500h5V9M10.500 6.500h3M18 6l-8 9-2-2 8-8c1-1 3 0 2 1z"/><path fill="#2b88d8" stroke="#1a6fb5" d="M10 15c0 4-5 5-7 3 2 0 2-5 5-5z"/></svg></button>
            <button aria-label="Add pane"><svg width="18" height="18" viewBox="0 0 18 18"><path d="M9.500 0v18M0 8.500h18" stroke="#000"/></svg></button>
            <button class="settings" aria-label="Settings"><svg width="22" height="22" viewBox="0 0 22 22" fill="none" stroke="#323130" stroke-width="1.500"><path d="M9 4l1-2h3l1 2 2 1 3-1 2 3-2 2v3l2 2-2 4-3-1-2 1-1 2h-3l-1-2-2-1-3 1-2-4 2-2V9L2 7l2-3 3 1z"/><circle cx="11.500" cy="11" r="3"/></svg></button>
        </nav>
    </main>

    <footer class="status">
        <span class="pageno">Page 2 of 3</span>
        <span>-</span>
        <input type="range" min="0" max="100" value="34" aria-label="Zoom">
        <span>+</span>
        <span class="zoom">70%</span>
        <svg width="16" height="12" viewBox="0 0 16 12" fill="none" stroke="#605e5c"><path d="M.5.5h15v11H.5zM3 5V3h3M10 3h3v2M13 7v2h-3M6 9H3V7"/></svg>
        <a href="#">Update available (click to download)</a>
    </footer>
    <div class="taskbar"></div>
</body>
</html>
```
FILE: styles.css
```
* {
    box-sizing: border-box;
}
body {
    margin: 0;
    height: 100vh;
    display: flex;
    flex-direction: column;
    overflow: hidden;
    font-family: "Open Sans", "Noto Sans", sans-serif;
    font-size: 12px;
    color: #252423;
    background: #f3f2f1;
}
button, input {
    font: inherit;
    color: inherit;
    border: 0;
    padding: 0;
    margin: 0;
    background: none;
}
a {
    color: inherit;
    text-decoration: none;
}
h1, h2, h3, p, ul {
    margin: 0;
    padding: 0;
    font-weight: normal;
    list-style: none;
}
svg {
    flex: none;
    overflow: visible;
}
.sprite {
    display: none;
}

/* icon strokes and fills */
.ln { fill: none; stroke: #323130; }
.wt { fill: #fff; stroke: #323130; }
.bl { fill: #83beec; stroke: #0063b1; }
.gr { fill: #c8c6c4; stroke: #797775; }
.bs { fill: none; stroke: #0063b1; }
.gs { fill: none; stroke: #797775; }
.or { fill: #fcc66b; stroke: #d87a16; }
.thick { stroke-width: 1.3; }
.t123 {
    font-size: 8px;
    font-weight: 600;
    text-anchor: middle;
    fill: #0063b1;
}
.glyph {
    font-size: 15px;
    font-weight: bold;
    text-anchor: middle;
    fill: #2b7fc0;
}
.xl {
    font-size: 11px;
    font-weight: bold;
    text-anchor: middle;
    fill: #fff;
}
.dax {
    font-size: 8px;
    fill: #605e5c;
    stroke: none;
}

/* title bar */
.titlebar {
    display: grid;
    grid-template-columns: 589fr 400fr 377fr;
    align-items: center;
    height: 34px;
    background: #3b3a39;
    color: #fff;
}
.title-left {
    display: flex;
    align-items: center;
    gap: 12px;
    padding-left: 16px;
    white-space: nowrap;
}
.title-left .doc {
    margin: 4px 0 0 -4px;
    font-size: 11px;
}
.top-search {
    display: flex;
    align-items: center;
    gap: 10px;
    height: 24px;
    padding-left: 17px;
    border-radius: 2px;
    background: #d2d2d2;
    color: #323130;
}
.top-search input {
    flex: 1;
    min-width: 0;
    font-size: 13px;
}
.top-search input::placeholder {
    color: #2d6652;
    opacity: 1;
}
.title-right {
    display: flex;
    justify-content: flex-end;
    align-items: center;
    padding-right: 16px;
}
.title-right a {
    margin-right: 10px;
}
.title-right button {
    display: flex;
    margin-left: 32px;
}
.title-right svg + button {
    margin-left: 31px;
}

/* menu */
.menu {
    display: flex;
    align-items: center;
    height: 34px;
    padding: 0 6px 0 23px;
    gap: 32px;
    background: #fafafa;
    font-size: 13px;
}
.menu a {
    height: 31px;
    line-height: 30px;
    border-bottom: 3px solid transparent;
}
.menu a:first-child {
    margin-right: 5px;
}
.menu .active {
    font-weight: 600;
    border-bottom-color: #117865;
}
.share {
    display: flex;
    align-items: center;
    gap: 6px;
    height: 24px;
    margin: -2px 0 0 auto;
    padding: 0 6px;
    border-radius: 4px;
    background: #117865;
    color: #fff;
    font-size: 12px;
}

/* ribbon */
.ribbon {
    display: flex;
    height: 92px;
    background: #fafafa;
    border-bottom: 1px solid #d6d4d2;
    box-shadow: 0 1px 3px #0002;
    z-index: 1;
}
.group {
    display: flex;
    flex-direction: column;
    justify-content: space-between;
    margin: 2px 0 1px;
    border-right: 1px solid #d2d0ce;
}
.group h2 {
    font-size: 10px;
    line-height: 10px;
    text-align: center;
}
.g-clip { width: 81px; padding-left: 10px; }
.g-clip h2 { margin-left: -10px; }
.g-data { width: 369px; padding-left: 5px; }
.g-query { width: 117px; padding-left: 7px; }
.g-insert { width: 410px; padding-left: 9px; }
.g-calc { width: 115px; padding-left: 7px; }
.g-sens { width: 74px; padding-left: 1px; }
.g-pub { width: 60px; padding-left: 4px; }
.tools {
    display: flex;
    align-items: flex-start;
}
.tool {
    display: flex;
    flex-direction: column;
    align-items: center;
    padding-top: 6px;
    font-size: 11px;
    line-height: 16px;
    white-space: nowrap;
    color: #3b3a39;
}
.tool .big {
    width: 32px;
    height: 32px;
    margin-bottom: 2px;
}
.off {
    color: #bebbb8;
}
.w34 { width: 34px; }
.w36 { width: 36px; }
.w38 { width: 38px; }
.w40 { width: 40px; }
.w42 { width: 42px; }
.w44 { width: 44px; }
.w46 { width: 46px; }
.w50 { width: 50px; }
.w52 { width: 52px; }
.w56 { width: 56px; }
.w60 { width: 60px; }
.w70 { width: 70px; }
.chev {
    width: 8px;
    height: 8px;
}
.minis {
    display: flex;
    flex-direction: column;
    padding: 4px 0 0 5px;
}
.minis button {
    height: 24px;
}
.gallery {
    display: flex;
    width: 254px;
    height: 62px;
    margin: 7px 4px 0 5px;
    border: 1px solid #797775;
    background: #fff;
}
.gallery-grid {
    flex: 1;
    min-width: 0;
    display: grid;
    grid-template-columns: repeat(9, 26px);
    grid-template-rows: 29px 29px;
    align-items: center;
    padding-left: 6px;
}
.gallery svg:not(.chev) {
    width: 16px;
    height: 16px;
}
.gallery button {
    flex: none;
    width: 16px;
    border-left: 1px solid #797775;
}
.collapse {
    margin: auto 4px 3px auto;
    height: 12px;
    line-height: 8px;
}

/* workspace */
.workspace {
    flex: 1;
    display: flex;
    min-height: 0;
}
.views {
    width: 41px;
    border-right: 1px solid #e1dfdd;
}
.views a {
    display: flex;
    align-items: center;
    height: 40px;
    padding-left: 9px;
    border-left: 3px solid transparent;
}
.views .active {
    border-left-color: #117865;
}
.views svg {
    width: 18px;
    height: 18px;
}
.center {
    flex: 1;
    min-width: 0;
    display: flex;
    flex-direction: column;
}
.canvas-row {
    flex: 1;
    display: flex;
    min-height: 0;
}
.canvas {
    flex: 1;
    min-width: 0;
    display: flex;
    padding: 3px 0 8px;
    margin-bottom: 3px;
    background: #fff;
}
.page {
    flex: 1;
    border-left: 2px dotted #605e5c;
    border-right: 1px solid #a19f9d;
    background: linear-gradient(#311a31 171px, #6b6670 171px, #6b6670 172px, #e6e6e6 172px);
}
.page h1 {
    height: 81px;
    padding-right: 20px;
    line-height: 68px;
    text-align: center;
    font-size: 16px;
    font-weight: bold;
    color: #fff;
}
.page h3, .kpi strong, .years {
    font-family: Roboto, sans-serif;
}
.page h3 {
    font-size: 12px;
    line-height: 16px;
}
.board {
    display: flex;
    gap: 16px;
    padding: 0 11px 0 10px;
}
.board-left {
    width: 199px;
    padding-top: 4px;
}
.kpi {
    height: 71px;
    margin-right: 12px;
    border-radius: 20px;
    background: #fff;
    text-align: center;
}
.page .kpi h3 {
    padding-top: 1px;
    padding-left: 7px;
    font-weight: 600;
}
.kpi strong {
    display: block;
    padding-left: 10px;
    font-size: 37px;
    line-height: 60px;
    font-weight: normal;
    color: #31003f;
}
.kpi.second {
    height: 75px;
    margin-top: 29px;
}
.page .kpi.second h3 {
    padding: 7px 9px 0 0;
    font-size: 11px;
}
.kpi.second strong {
    padding: 0 9px 0 0;
}
.card {
    border-radius: 28px;
    background: #fff;
}
.card h3 {
    padding-left: 23px;
}
.chart {
    display: block;
    width: 100%;
}
.year {
    height: 136px;
    margin-top: 10px;
    padding-top: 10px;
    border-radius: 36px;
}
.year h3 {
    padding-left: 15px;
}
.board-right {
    flex: 1;
    min-width: 0;
}
.row {
    display: flex;
}
.top {
    gap: 23px;
    margin-bottom: 10px;
}
.top .card {
    height: 158px;
}
.pie {
    flex: 319;
    padding-top: 3px;
}
.pie-body {
    display: flex;
    padding-left: 23px;
}
.pie-svg {
    width: 190px;
    margin-top: 4px;
}
.pie-legend {
    padding: 7px 0 0 8px;
    font-size: 9px;
    color: #605e5c;
}
.pie-legend b {
    display: block;
    line-height: 14px;
}
.pie-legend li {
    display: flex;
    align-items: center;
    line-height: 18px;
    gap: 2px;
}
.page i {
    flex: none;
    width: 7px;
    height: 7px;
    border-radius: 50%;
}
.c-europe { background: #e66c37; }
.c-namerica { background: #6b007b; }
.c-asia { background: #12239e; }
.c-samerica { background: #4c2f73; }
.c-oceania { background: #e044a7; }
.c-africa { background: #118dff; }
.units {
    flex: 317;
    padding-top: 10px;
}
.legend {
    display: flex;
    gap: 4px;
    padding: 6px 0 6px 23px;
    font-size: 8px;
    line-height: 12px;
    color: #605e5c;
    white-space: nowrap;
}
.legend li {
    display: flex;
    align-items: center;
    gap: 1px;
}
.bottom {
    gap: 14px;
    margin-right: 6px;
}
.percase {
    flex: 489;
    height: 156px;
    padding-top: 10px;
}
.side {
    flex: 150;
}
.dots {
    fill: none;
    stroke: #c8c6c4;
    stroke-dasharray: 1 3;
}
.tick text {
    font-size: 8px;
    fill: #797775;
}
.end {
    text-anchor: end;
}
.mid {
    text-anchor: middle;
}
.axis {
    font-size: 7px;
    fill: #252423;
    text-anchor: middle;
}
.filter {
    display: grid;
}
.filter-back, .slicer {
    grid-area: 1 / 1;
}
.filter-back {
    margin: 0 0 9px;
    border-radius: 24px;
    background: #fff;
}
.slicer {
    margin: 8px 0 0 5px;
    padding: 0 4px 4px;
    background: #fff;
}
.slicer h3 {
    line-height: 14px;
}
.years {
    display: grid;
    grid-template-columns: repeat(3, 1fr);
    gap: 5px;
    padding-top: 2px;
}
.years button {
    height: 50px;
    border: 1px solid #b3b0ad;
    font-size: 10px;
}
.next {
    display: block;
    width: 22px;
    margin: 6px 0 0 101px;
}
.filters {
    display: flex;
    flex-direction: column;
    align-items: center;
    gap: 14px;
    width: 32px;
    padding-top: 12px;
    background: #fff;
}
.filters h2 {
    writing-mode: vertical-rl;
    font-size: 14px;
    line-height: 18px;
    font-weight: 600;
    margin-top: -6px;
}
.flip {
    transform: scaleX(-1);
}

/* page tabs */
.pagetabs {
    display: flex;
    height: 35px;
    padding-left: 10px;
}
.device {
    width: 24px;
    height: 31px;
    margin-right: 20px;
    line-height: 8px;
    border-bottom: 3px solid transparent;
}
.device.on {
    border-bottom-color: #117865;
}
.arrow {
    width: 22px;
}
.arrow:nth-child(3) {
    margin-left: -14px;
}
.arrow:nth-child(4) {
    margin-right: -1px;
}
.tab {
    padding: 0 21px;
    line-height: 37px;
    font-size: 11px;
    background: #fff;
    border-right: 1px solid #d2d0ce;
}
.tab.first {
    border-left: 1px solid #a19f9d;
}
.tab.on {
    position: relative;
    border-bottom: 4px solid #117865;
}
.tab .x {
    position: absolute;
    top: 2px;
    right: 4px;
    font-size: 10px;
    line-height: 14px;
}
.add {
    width: 40px;
    background: #117865;
}

/* right panes */
.pane {
    width: 181px;
    border-left: 1px solid #e1dfdd;
}
.pane-head {
    display: flex;
    align-items: center;
    gap: 8px;
    height: 38px;
    padding: 0 7px 0 8px;
    color: #605e5c;
}
.pane-head h2 {
    flex: 1;
    font-size: 14px;
    font-weight: 600;
    color: #252423;
}
.pane-body {
    padding: 0 8px;
}
.pane p {
    line-height: 16px;
}
.visuals {
    display: grid;
    grid-template-columns: repeat(6, 26px);
    grid-auto-rows: 26px;
    align-items: center;
    margin-top: 3px;
    padding: 2px 0 2px 7px;
    border: 1px solid #797775;
    border-radius: 2px;
    background: #fff;
}
.visuals svg {
    width: 18px;
    height: 18px;
}
.pane .data-label {
    margin: 9px 0 3px;
}
.drop {
    padding: 4px;
    border: 1px dashed #605e5c;
}
.drop button {
    display: block;
    width: 100%;
    height: 31px;
    border: 1px solid #605e5c;
    border-radius: 2px;
    background: #fff;
}
.data-search {
    display: flex;
    align-items: center;
    gap: 6px;
    height: 27px;
    margin: 7px 4px 9px;
    padding-left: 8px;
    border: 1px solid #797775;
    border-radius: 2px;
    color: #605e5c;
}
.data-search input {
    flex: 1;
    min-width: 0;
    font-size: 13px;
}
.data-search input::placeholder {
    color: #605e5c;
    opacity: 1;
}
.tables li {
    display: flex;
    align-items: center;
    gap: 5px;
    height: 24px;
    padding-left: 15px;
}
.rail {
    display: flex;
    flex-direction: column;
    width: 33px;
    border-left: 1px solid #e1dfdd;
    background: #faf9f8;
}
.rail button {
    height: 32px;
    line-height: 8px;
}
.rail .on {
    border: 1px solid #605e5c;
    background: #e1dfdd;
}
.rail .settings {
    margin-top: auto;
    border-top: 1px solid #d2d0ce;
}

/* status bar */
.status {
    display: flex;
    align-items: center;
    height: 24px;
    padding: 2px 6px 0 4px;
    border-top: 1px solid #dcdad8;
    font-size: 11px;
    color: #484644;
}
.pageno {
    margin-right: auto;
}
.status input {
    appearance: none;
    width: 100px;
    height: 12px;
    margin: 0 6px 0 4px;
    background: linear-gradient(#605e5c, #605e5c) 0 6px / 100% 1px no-repeat,
        linear-gradient(#605e5c, #605e5c) 50px 4px / 1px 5px no-repeat;
}
.status input::-webkit-slider-thumb {
    appearance: none;
    width: 4px;
    height: 12px;
    background: #605e5c;
}
.zoom {
    margin: 0 20px 0 14px;
}
.status a {
    margin-left: 18px;
}
.taskbar {
    height: 3px;
    background: linear-gradient(#fff, #fff) 48px 2px / 288px 1px no-repeat #1b1a19;
}
```
